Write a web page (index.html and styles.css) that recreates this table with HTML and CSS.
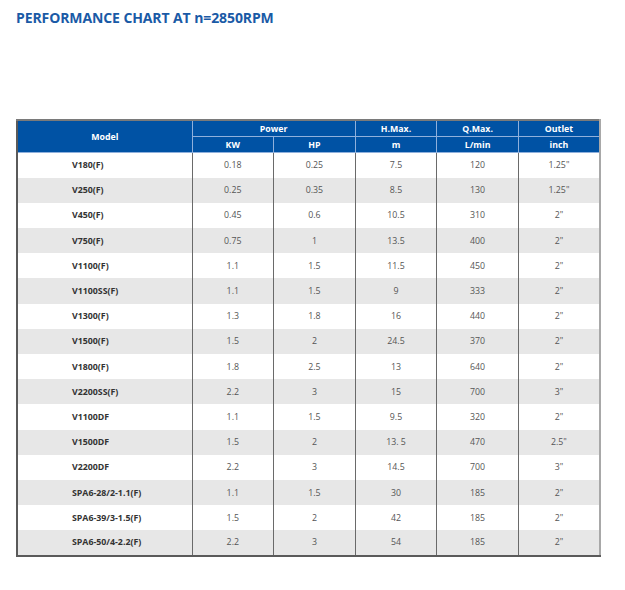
FILE: index.html
```html
<!DOCTYPE html>
<html>
<head>
<meta charset="utf-8">
<link rel="stylesheet" href="styles.css">
</head>
<body>
<h1 class="title">PERFORMANCE CHART AT n=2850RPM</h1>
<table class="chart">
<colgroup>
<col class="c-model"><col class="c-num"><col class="c-num"><col class="c-num"><col class="c-num"><col class="c-num">
</colgroup>
<thead>
<tr><th rowspan="2">Model</th><th colspan="2">Power</th><th>H.Max.</th><th>Q.Max.</th><th>Outlet</th></tr>
<tr><th>KW</th><th>HP</th><th>m</th><th>L/min</th><th>inch</th></tr>
</thead>
<tbody>
<tr><td class="model">V180(F)</td><td>0.18</td><td>0.25</td><td>7.5</td><td>120</td><td>1.25"</td></tr>
<tr><td class="model">V250(F)</td><td>0.25</td><td>0.35</td><td>8.5</td><td>130</td><td>1.25"</td></tr>
<tr><td class="model">V450(F)</td><td>0.45</td><td>0.6</td><td>10.5</td><td>310</td><td>2"</td></tr>
<tr><td class="model">V750(F)</td><td>0.75</td><td>1</td><td>13.5</td><td>400</td><td>2"</td></tr>
<tr><td class="model">V1100(F)</td><td>1.1</td><td>1.5</td><td>11.5</td><td>450</td><td>2"</td></tr>
<tr><td class="model">V1100SS(F)</td><td>1.1</td><td>1.5</td><td>9</td><td>333</td><td>2"</td></tr>
<tr><td class="model">V1300(F)</td><td>1.3</td><td>1.8</td><td>16</td><td>440</td><td>2"</td></tr>
<tr><td class="model">V1500(F)</td><td>1.5</td><td>2</td><td>24.5</td><td>370</td><td>2"</td></tr>
<tr><td class="model">V1800(F)</td><td>1.8</td><td>2.5</td><td>13</td><td>640</td><td>2"</td></tr>
<tr><td class="model">V2200SS(F)</td><td>2.2</td><td>3</td><td>15</td><td>700</td><td>3"</td></tr>
<tr><td class="model">V1100DF</td><td>1.1</td><td>1.5</td><td>9.5</td><td>320</td><td>2"</td></tr>
<tr><td class="model">V1500DF</td><td>1.5</td><td>2</td><td>13. 5</td><td>470</td><td>2.5"</td></tr>
<tr><td class="model">V2200DF</td><td>2.2</td><td>3</td><td>14.5</td><td>700</td><td>3"</td></tr>
<tr><td class="model">SPA6-28/2-1.1(F)</td><td>1.1</td><td>1.5</td><td>30</td><td>185</td><td>2"</td></tr>
<tr><td class="model">SPA6-39/3-1.5(F)</td><td>1.5</td><td>2</td><td>42</td><td>185</td><td>2"</td></tr>
<tr><td class="model">SPA6-50/4-2.2(F)</td><td>2.2</td><td>3</td><td>54</td><td>185</td><td>2"</td></tr>
</tbody>
</table>
</body>
</html>
```
FILE: styles.css
```css
html, body {
  margin: 0;
  padding: 0;
  background: #ffffff;
}
body {
  font-family: "Open Sans", "Noto Sans", sans-serif;
}
.title {
  margin: 0;
  padding: 8px 0 0 16px;
  font-size: 14px;
  line-height: 19px;
  font-weight: 700;
  color: #1a5aa6;
  letter-spacing: -0.1px;
}
.chart {
  margin: 92px 0 0 16px;
  width: 584px;
  border-collapse: collapse;
  table-layout: fixed;
  border-top: 2px solid #7a7a7a;
  border-left: 2px solid #5a5a5a;
  border-right: 2px solid #a8a8a8;
  border-bottom: 2px solid #5a5a5a;
}
.c-model { width: 175px; }
.c-num { width: 81.6px; }
.chart th {
  background: #0052a4;
  color: #ffffff;
  font-size: 8.8px;
  font-weight: 700;
  height: 15px;
  padding: 0;
  border: 1px solid #8fb0dc;
  text-align: center;
}
.chart thead tr:first-child th { border-top: 0; }
.chart th:first-child { border-left: 0; }
.chart th:last-child { border-right: 0; }
.chart td {
  height: 25.2px;
  padding: 0;
  font-size: 8.8px;
  color: #555555;
  text-align: center;
  border-left: 1px solid #6a6a6a;
  border-right: 1px solid #6a6a6a;
  box-sizing: border-box;
}
.chart tbody tr:nth-child(even) td { background: #e7e7e7; }
.chart td.model {
  text-align: left;
  padding-left: 54px;
  font-weight: 700;
  color: #333333;
}
```
